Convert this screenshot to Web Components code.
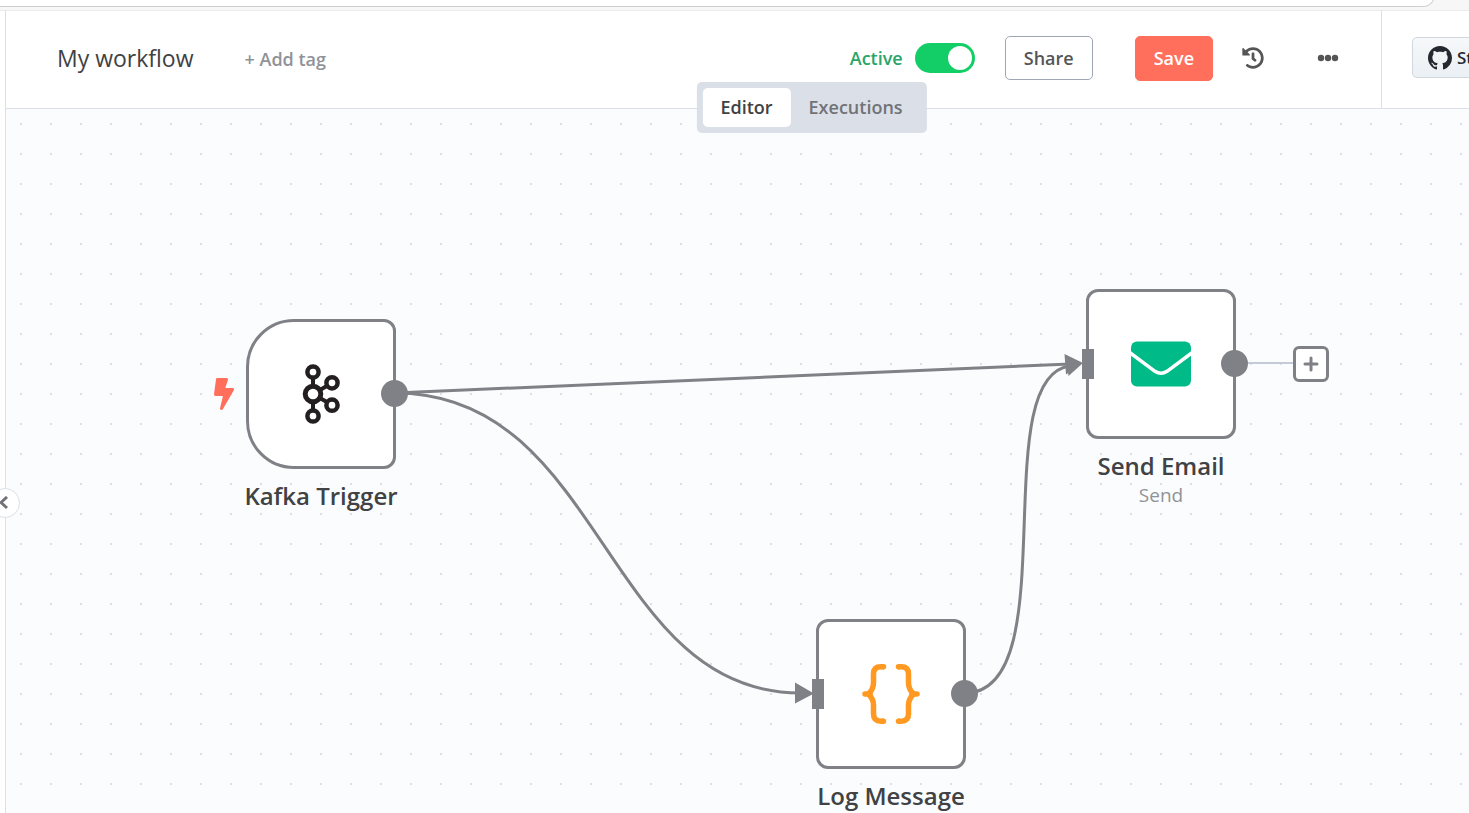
<!DOCTYPE html>
<html lang="en">
<head>
<meta charset="utf-8">
<title>My workflow</title>
<style>
html, body { height: 100%; margin: 0; }
body { font-family: "Open Sans", sans-serif; font-size: 18px; line-height: 24px; color: #404244; overflow: hidden; background: #fff; }
</style>
</head>
<body>
<workflow-app></workflow-app>
<script>
const define = (name, html, setup) => customElements.define(name, class extends HTMLElement {
  connectedCallback() {
    if (this.shadowRoot) return;
    const root = this.attachShadow({ mode: 'open' });
    root.innerHTML = '<style>*{box-sizing:border-box}button{font:inherit;color:inherit;margin:0;cursor:pointer}svg{display:block}</style>' + html;
    if (setup) setup(this, root);
  }
});

define('browser-edge', `
<style>
:host { display: block; height: 11px; background: #f7f7f7; border-bottom: 1px solid #ebebeb; box-sizing: border-box; overflow: hidden; padding-right: 34px; }
div { height: 24px; margin-top: -17px; background: #fff; border: 1px solid #cfcfcf; border-left: 0; border-radius: 0 12px 12px 0; }
</style><div></div>`);

define('side-rail', `
<style>
:host { display: block; position: relative; width: 6px; box-sizing: border-box; border-right: 1px solid #dbdfe7; background: #fff; z-index: 2; }
button { position: absolute; left: -10px; top: 477px; width: 30px; height: 30px; padding: 0 0 0 7px; border: 1px solid #dbdfe7; border-radius: 50%; background: #fff; }
</style>
<button aria-label="Expand menu"><svg width="12" height="14" viewBox="0 0 12 14" fill="none" stroke="#717377" stroke-width="3"><path d="M9 1L3 6.500l6 5.500"/></svg></button>`);

define('status-switch', `
<style>
:host { display: flex; align-items: center; gap: 12px; }
label { color: #29a568; font-weight: 600; }
input { appearance: none; margin: 0; width: 60px; height: 30px; padding: 3px; border-radius: 15px; background: #13ce66; display: flex; justify-content: flex-end; }
input::before { content: ""; width: 24px; height: 24px; border-radius: 50%; background: #fff; }
</style>
<label for="s"><slot></slot></label><input id="s" type="checkbox" role="switch" checked>`);

define('action-button', `
<style>
:host { display: block; }
button { display: block; height: 44px; padding: 0 18px; border: 1px solid #a1a6b7; border-radius: 5px; background: #fff; color: #555; font-weight: 600; }
:host([primary]) button { height: 45px; background: #ff6f5c; border-color: #ff6f5c; color: #fff; }
</style><button><slot></slot></button>`);

define('icon-button', `
<style>
:host { display: block; }
button { display: block; padding: 0; border: 0; background: none; }
svg { fill: #555; width: 22px; height: 22px; }
</style><button></button>`, (el, root) => {
  const b = root.querySelector('button');
  b.setAttribute('aria-label', el.getAttribute('label'));
  b.innerHTML = el.getAttribute('icon') === 'history'
    ? '<svg viewBox="0 0 512 512"><path d="M504 255.531c.253 136.64-111.18 248.372-247.82 248.468-59.015.042-113.223-20.53-155.822-54.911-11.077-8.94-11.905-25.541-1.839-35.607l11.267-11.267c8.609-8.609 22.353-9.551 31.891-1.984C173.062 425.135 212.781 440 256 440c101.705 0 184-82.311 184-184 0-101.705-82.311-184-184-184-48.814 0-93.149 18.969-126.068 49.932l50.754 50.754c10.08 10.08 2.941 27.314-11.313 27.314H24c-8.837 0-16-7.163-16-16V38.627c0-14.254 17.234-21.393 27.314-11.314l49.372 49.372C129.209 34.136 189.552 8 256 8c136.81 0 247.747 110.78 248 247.531zm-180.912 78.784l9.823-12.63c8.138-10.463 6.253-25.542-4.21-33.679L288 256.349V152c0-13.255-10.745-24-24-24h-16c-13.255 0-24 10.745-24 24v135.651l65.409 50.874c10.463 8.137 25.541 6.253 33.679-4.21z"/></svg>'
    : '<svg viewBox="0 0 22 22"><circle cx="4" cy="11" r="3.200"/><circle cx="11" cy="11" r="3.200"/><circle cx="18" cy="11" r="3.200"/></svg>';
});

define('github-star', `
<style>
:host { display: flex; align-items: center; width: 88px; flex: none; box-sizing: border-box; padding: 0 0 4px 30px; border-left: 1px solid #dbdfe7; overflow: hidden; }
a { flex: none; display: flex; align-items: center; gap: 5px; box-sizing: border-box; height: 41px; padding: 0 15px; border: 1px solid #d0d7e0; border-radius: 5px; background: linear-gradient(#f6f8fa, #ebf0f4); color: #24292f; text-decoration: none; font-weight: 600; font-size: 17px; }
</style>
<a href="#star"><svg width="24" height="24" viewBox="0 0 16 16" fill="#24292f"><path d="M8 0C3.580 0 0 3.580 0 8c0 3.540 2.290 6.530 5.470 7.590.4.070.55-.17.55-.38 0-.19-.01-.82-.01-1.490-2.010.37-2.530-.49-2.690-.94-.09-.23-.48-.94-.82-1.130-.28-.15-.68-.52-.01-.53.63-.01 1.080.58 1.230.82.72 1.210 1.870.87 2.330.66.07-.52.28-.87.51-1.070-1.780-.2-3.640-.89-3.640-3.950 0-.87.31-1.590.82-2.150-.08-.2-.36-1.020.08-2.120 0 0 .67-.21 2.200.82.64-.18 1.320-.27 2-.27s1.360.09 2 .27c1.530-1.040 2.200-.82 2.200-.82.44 1.100.16 1.920.08 2.120.51.56.82 1.270.82 2.150 0 3.070-1.870 3.750-3.650 3.950.29.25.54.73.54 1.480 0 1.070-.01 1.930-.01 2.200 0 .21.15.46.55.38A8.010 8.010 0 0 0 16 8c0-4.420-3.580-8-8-8z"/></svg><span>Star</span></a>`);

define('view-tabs', `
<style>
:host { display: flex; padding: 6px; border-radius: 5px; background: #dbdfe7; }
button { height: 39px; padding: 0 18px 2px; border: 0; border-radius: 5px; background: none; color: #717377; font-weight: 600; }
button[aria-selected=true] { background: #fff; color: #404244; }
</style>
<button role="tab" aria-selected="true">Editor</button><button role="tab" aria-selected="false">Executions</button>`);

define('workflow-header', `
<style>
:host { display: flex; position: relative; z-index: 1; height: 98px; flex: none; box-sizing: border-box; border-bottom: 1px solid #dbdfe7; background: #fff; }
.bar { flex: 1; display: flex; align-items: center; padding: 0 42px 3px 51px; }
h1 { margin: 0 51px 0 0; font-size: 23px; line-height: 32px; font-weight: 400; }
.tag { padding: 2px 0 0; border: 0; background: none; color: #909298; font-weight: 600; }
.actions { display: flex; align-items: center; margin-left: auto; }
.share { margin: 0 42px 0 30px; }
.history { margin: 0 53px 0 29px; }
view-tabs { position: absolute; left: calc(50% + 74px); bottom: -25px; transform: translateX(-50%); }
</style>
<div class="bar"><h1>My workflow</h1><button class="tag">+ Add tag</button>
<div class="actions"><status-switch>Active</status-switch>
<action-button class="share">Share</action-button><action-button primary>Save</action-button>
<icon-button class="history" icon="history" label="Workflow history"></icon-button><icon-button icon="more" label="More options"></icon-button></div></div>
<github-star></github-star>
<view-tabs role="tablist"></view-tabs>`);

define('flow-node', `
<style>
:host { display: block; position: absolute; width: 150px; text-align: center; }
.box { position: relative; width: 150px; height: 150px; border: 3px solid #7f8186; border-radius: 12px; background: #fff; display: grid; place-items: center; }
:host([trigger]) .box { border-radius: 48px 12px 12px 48px; }
.out { position: absolute; right: -15px; top: 58px; width: 27px; height: 27px; border-radius: 50%; background: #7f8186; }
.in { position: absolute; left: -7px; top: 57px; width: 12px; height: 30px; background: #7f8186; }
:host([trigger]) .in { display: none; }
.name { margin: 11px -30px 0; font-size: 24px; line-height: 32px; font-weight: 600; }
.sub { color: #909298; font-size: 19px; line-height: 26px; }
</style>
<div class="box"><slot name="icon"></slot><i class="in"></i><i class="out"></i></div>
<div class="name"><slot></slot></div><div class="sub"><slot name="sub"></slot></div>`);

define('flow-canvas', `
<style>
:host { display: block; position: relative; flex: 1; overflow: hidden; background: #fbfcfe; }
.grid { position: absolute; inset: 0; background: conic-gradient(from 90deg at 28px 28px, #dbdfe7 0 90deg, transparent 0) -14px -14px / 30px 30px; }
.edges { position: absolute; left: 0; top: 0; width: 100%; height: 100%; overflow: visible; }
.kafka { left: 240px; top: 210px; } .email { left: 1080px; top: 180px; } .log { left: 810px; top: 510px; }
.bolt { position: absolute; left: 208px; top: 269px; }
.add { position: absolute; left: 1287px; top: 237px; width: 36px; height: 36px; padding: 0; border: 3px solid #7f8186; border-radius: 6px; background: #fff; display: grid; place-items: center; }
</style>
<div class="grid"></div>
<svg class="edges"><g transform="translate(-6 -109)" fill="none" stroke="#7f8186" stroke-width="3">
<path d="M1240 363H1294" stroke="#c5cad9" stroke-width="2"/>
<path d="M395 393L1070 364"/><path d="M395 393C604 393 604 693 800 693"/><path d="M965 693C1067 693 985 376 1070 366"/>
<path d="M795 682.500L814 693.500L795 703.500zM1064.500 354L1083 363L1066 374.500zM1066 357L1083 363L1068.500 376z" fill="#7f8186" stroke="none"/></g></svg>
<svg class="bolt" width="20" height="32" viewBox="0 0 320 512" fill="#ff6f5c"><path d="M296 160H180.600l42.600-129.800C227.200 15 215.700 0 200 0H56C44 0 33.800 8.900 32.200 20.800l-32 240C-1.700 275.200 9.500 288 24 288h118.700L96.600 482.500c-3.600 15.200 8 29.500 23.300 29.500 8.400 0 16.400-4.400 20.800-12l176-304c9.300-15.900-2.200-36-20.700-36z"/></svg>
<flow-node class="kafka" trigger>Kafka Trigger<svg slot="icon" width="60" height="60" viewBox="0 0 60 60" fill="none" stroke="#231f20" stroke-width="4.500"><path d="M22 13v34M22 30l19-11M22 30l19 11" stroke-width="4"/><g fill="#fff"><circle cx="22" cy="30" r="7.800" stroke-width="5"/><circle cx="22" cy="8" r="5.600"/><circle cx="22" cy="52" r="5.600"/><circle cx="41" cy="18.800" r="5.600"/><circle cx="41" cy="41.200" r="5.600"/></g></svg></flow-node>
<flow-node class="email">Send Email<span slot="sub">Send</span><svg slot="icon" width="60" height="60" viewBox="0 0 60 60"><rect y="7.500" width="60" height="45" rx="6" fill="#00bb88"/><path d="M-2 18L24 37.300q6 4 12 0L62 18" fill="none" stroke="#fff" stroke-width="3.500"/></svg></flow-node>
<flow-node class="log">Log Message<svg slot="icon" width="60" height="60" viewBox="0 0 60 60" fill="none" stroke="#ff9922" stroke-width="5.500"><path d="M23 2.800H20Q12.500 2.800 12.500 10V19Q12.500 25 7.500 30Q12.500 35 12.500 41V50Q12.500 57.200 20 57.200H23M37 2.800H40Q47.500 2.800 47.500 10V19Q47.500 25 52.500 30Q47.500 35 47.500 41V50Q47.500 57.200 40 57.200H37" stroke-linecap="butt"/><path d="M22 2.800h.5M22 57.200h.5M37.500 2.800h.5M37.500 57.200h.5M4 30H9M51 30H56" stroke-linecap="round"/></svg></flow-node>
<button class="add" aria-label="Add node"><svg width="16" height="16" viewBox="0 0 16 16" fill="none" stroke="#7f8186" stroke-width="3" stroke-linecap="round"><path d="M8 2v12M2 8h12"/></svg></button>`);

define('workflow-app', `
<style>
:host { display: flex; flex-direction: column; height: 100vh; }
.body { flex: 1; display: flex; min-height: 0; }
side-rail { flex: none; }
main { flex: 1; min-width: 0; display: flex; flex-direction: column; }
</style>
<browser-edge></browser-edge><div class="body"><side-rail></side-rail><main><workflow-header></workflow-header><flow-canvas></flow-canvas></main></div>`);
</script>
</body>
</html>
